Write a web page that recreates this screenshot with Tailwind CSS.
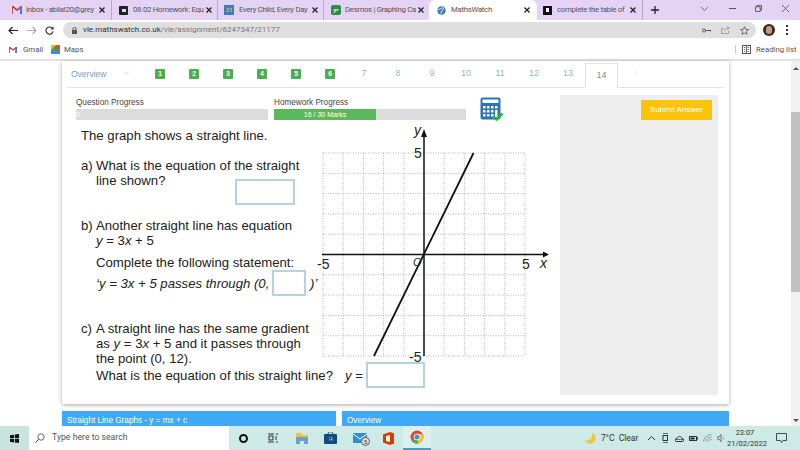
<!DOCTYPE html>
<html lang="en">
<head>
  <meta charset="UTF-8">
  <title>MathsWatch</title>
  <script src="https://cdn.jsdelivr.net/npm/@tailwindcss/browser@4"></script>
</head>
<body class="w-[800px] h-[450px] overflow-hidden flex flex-col bg-white font-['Liberation_Sans',sans-serif] text-[#333]">

  <!-- tab strip -->
  <div class="h-[20px] flex items-center bg-[#e5d3f6] pl-[8px] font-['Roboto',sans-serif] text-[7.8px] tracking-[-0.3px] text-[#555] whitespace-nowrap">
    <div class="w-[104px] h-full flex items-center border-r border-[#9a8aa8]/60">
      <svg class="ml-[4px] w-[10px] h-[8px] shrink-0" viewBox="0 0 10 8"><path d="M0 8V0l5 4 5-4v8" fill="none" stroke="#c5392b" stroke-width="1.6"/><path d="M8.7 1v7" stroke="#3a7de0" stroke-width="1.6"/></svg>
      <span class="ml-[4px] w-[68px]">Inbox - abilal20@grey</span>
      <svg class="ml-[5px] w-[6px] h-[6px] shrink-0" viewBox="0 0 6 6"><path d="M.5.5l5 5M5.500.5l-5 5" stroke="#222" stroke-width="1.300"/></svg>
    </div>
    <div class="w-[106px] h-full flex items-center border-r border-[#9a8aa8]/60">
      <div class="ml-[7px] w-[9px] h-[9px] bg-[#222] rounded-[1px] shrink-0 flex items-center justify-center"><div class="w-[4px] h-[3px] bg-[#ddd]"></div></div>
      <span class="ml-[5px] w-[66px]">08.02 Homework: Equ</span>
      <svg class="ml-[7px] w-[6px] h-[6px] shrink-0" viewBox="0 0 6 6"><path d="M.5.5l5 5M5.500.5l-5 5" stroke="#222" stroke-width="1.300"/></svg>
    </div>
    <div class="w-[106px] h-full flex items-center border-r border-[#9a8aa8]/60">
      <div class="ml-[6px] w-[10px] h-[10px] bg-[#3d7cc9] shrink-0 flex items-center justify-center text-[6px] leading-none text-[#e8b93a] font-bold">21</div>
      <span class="ml-[5px] w-[67px]">Every Child, Every Day</span>
      <svg class="ml-[6px] w-[6px] h-[6px] shrink-0" viewBox="0 0 6 6"><path d="M.5.5l5 5M5.500.5l-5 5" stroke="#222" stroke-width="1.300"/></svg>
    </div>
    <div class="w-[105px] h-full flex items-center">
      <div class="ml-[7px] w-[10px] h-[10px] bg-[#2e8b4a] rounded-[2px] shrink-0 flex items-center justify-center text-[5px] leading-none text-white font-bold">y=</div>
      <span class="ml-[4px] w-[68px]">Desmos | Graphing Ca</span>
      <svg class="ml-[5px] w-[6px] h-[6px] shrink-0" viewBox="0 0 6 6"><path d="M.5.5l5 5M5.500.5l-5 5" stroke="#222" stroke-width="1.300"/></svg>
    </div>
    <div class="w-[108px] h-full flex items-center bg-white rounded-t-[6px]">
      <svg class="ml-[8px] w-[9px] h-[9px] shrink-0" viewBox="0 0 10 10"><circle cx="5" cy="5" r="4.6" fill="#3f6f9e"/><path d="M1 4c2 1 3-2 5-2s1 2 0 3-2 3-1 4" fill="none" stroke="#a8d2e8" stroke-width="1.4"/></svg>
      <span class="ml-[5px] w-[72px]">MathsWatch</span>
      <svg class="ml-[1px] w-[6px] h-[6px] shrink-0" viewBox="0 0 6 6"><path d="M.5.5l5 5M5.500.5l-5 5" stroke="#222" stroke-width="1.300"/></svg>
    </div>
    <div class="w-[106px] h-full flex items-center border-r border-[#9a8aa8]/60">
      <div class="ml-[6px] w-[9px] h-[9px] bg-[#111] shrink-0 flex items-center justify-center"><div class="w-[3px] h-[4px] bg-white"></div></div>
      <span class="ml-[5px] w-[68px]">complete the table of</span>
      <svg class="ml-[5px] w-[6px] h-[6px] shrink-0" viewBox="0 0 6 6"><path d="M.5.5l5 5M5.500.5l-5 5" stroke="#222" stroke-width="1.300"/></svg>
    </div>
    <svg class="ml-[8px] w-[8px] h-[8px] shrink-0" viewBox="0 0 8 8"><path d="M4 0v8M0 4h8" stroke="#222" stroke-width="1.3"/></svg>
    <svg class="ml-[42px] w-[7px] h-[4px] mb-[3px] shrink-0" viewBox="0 0 7 4"><path d="M0 0l3.500 3.500L7 0" fill="none" stroke="#555" stroke-width="0.8"/></svg>
    <div class="ml-[21px] w-[7px] h-[1px] mb-[3px] bg-[#555] shrink-0"></div>
    <svg class="ml-[19px] w-[7px] h-[7px] mb-[3px] shrink-0" viewBox="0 0 7 7"><path d="M.5 1.800h4.700v4.700H.5zM1.800 1.800V.5h4.700v4.700H5.200" fill="none" stroke="#555" stroke-width="0.9"/></svg>
    <svg class="ml-[20px] w-[7px] h-[7px] mb-[3px] shrink-0" viewBox="0 0 7 7"><path d="M0 0l7 7M7 0L0 7" stroke="#555" stroke-width="0.8"/></svg>
  </div>

  <!-- address bar -->
  <div class="h-[20px] flex items-center bg-white">
    <svg class="ml-[8px] w-[10px] h-[9px] shrink-0" viewBox="0 0 10 9"><path d="M10 4.500H1M4.500 1L1 4.500 4.500 8" fill="none" stroke="#222" stroke-width="1.2"/></svg>
    <svg class="ml-[9px] w-[10px] h-[9px] shrink-0" viewBox="0 0 10 9"><path d="M0 4.500h9M5.500 1L9 4.500 5.500 8" fill="none" stroke="#aaa" stroke-width="1.2"/></svg>
    <svg class="ml-[8px] w-[9px] h-[9px] shrink-0" viewBox="0 0 10 10"><path d="M8.500 3A4 4 0 1 0 9 6" fill="none" stroke="#333" stroke-width="1.3"/><path d="M9.500 .5v3.500H6z" fill="#333"/></svg>
    <div class="ml-[9px] w-[693px] shrink-0 h-[16px] bg-[#dfdfdf] rounded-full flex items-center font-['Roboto',sans-serif] text-[8px] text-[#777] whitespace-nowrap">
      <svg class="ml-[9px] w-[5px] h-[7px] shrink-0" viewBox="0 0 5 7"><rect y="3" width="5" height="4" fill="#555"/><path d="M1 3V1.800a1.500 1.500 0 0 1 3 0V3" fill="none" stroke="#555"/></svg>
      <span class="ml-[6px]"><span class="text-[#333]">vle.mathswatch.co.uk</span>/vle/assignment/6247347/21177</span>
      <div class="flex-1"></div>
      <svg class="w-[9px] h-[5px] shrink-0" viewBox="0 0 9 5"><circle cx="2" cy="2.500" r="1.500" fill="none" stroke="#555"/><path d="M3.500 2.500H9V4" fill="none" stroke="#555"/></svg>
      <svg class="ml-[10px] w-[9px] h-[8px] shrink-0" viewBox="0 0 9 8"><path d="M2.500 2.500H.5v5h7V5M3.500 5c0-2 2-3 4-3M6 .3L8.500 2 6 3.800" fill="none" stroke="#888" stroke-width="0.7"/></svg>
      <svg class="ml-[10px] mr-[7px] w-[9px] h-[9px] shrink-0" viewBox="0 0 10 10"><path d="M5 .8l1.300 2.900 3.100.3-2.300 2.100.7 3.100L5 7.600 2.200 9.200l.7-3.100L.6 4l3.100-.3z" fill="none" stroke="#555" stroke-width="0.9"/></svg>
    </div>
    <div class="ml-[7px] w-[12px] h-[12px] rounded-full bg-[#3a2a22] shrink-0 flex items-center justify-center"><div class="w-[6px] h-[8px] rounded-full bg-[#c99a80]"></div></div>
    <div class="ml-[11px] w-[2px] h-[10px] flex flex-col justify-between shrink-0"><i class="block h-[2px] bg-[#333]"></i><i class="block h-[2px] bg-[#333]"></i><i class="block h-[2px] bg-[#333]"></i></div>
  </div>

  <!-- bookmarks bar -->
  <div class="h-[21px] flex items-center bg-white border-b-2 border-[#e2e2e2] font-['Roboto',sans-serif] text-[7.8px] text-[#555] whitespace-nowrap">
    <svg class="ml-[9px] w-[8px] h-[6px] shrink-0" viewBox="0 0 10 8"><path d="M0 8V0l5 4 5-4v8" fill="none" stroke="#c5392b" stroke-width="1.6"/><path d="M8.700 1v7" stroke="#3a7de0" stroke-width="1.6"/></svg>
    <span class="ml-[6px] w-[18px]">Gmail</span>
    <svg class="ml-[10px] w-[9px] h-[9px] shrink-0" viewBox="0 0 9 9"><rect width="9" height="9" y="0" fill="#3aa757"/><path d="M0 9l5-5 4 4v1z" fill="#4285f4"/><path d="M0 0h5L0 5z" fill="#fbbc05"/><circle cx="6.500" cy="2.500" r="2.200" fill="#ea4335"/></svg>
    <span class="ml-[4px]">Maps</span>
    <div class="flex-1"></div>
    <div class="w-px h-[9px] bg-[#ccc]"></div>
    <svg class="ml-[6px] w-[9px] h-[9px] shrink-0" viewBox="0 0 9 9"><rect x=".5" y=".5" width="8" height="8" fill="none" stroke="#555"/><path d="M4.500 1v7M2 2.500h1.500M2 4.500h1.500M2 6.500h1.500M5.500 2.500H7M5.500 4.500H7M5.500 6.500H7" stroke="#555" stroke-width="0.8"/></svg>
    <span class="ml-[5px] w-[44px]">Reading list</span>
  </div>

  <!-- page -->
  <div class="h-[365px] flex">
    <div class="w-[791px] pl-[62px]">
      <div class="relative w-[667px] h-[343px] bg-white shadow-[0_1px_4px_rgba(0,0,0,0.35)]">

        <!-- question nav -->
        <div class="mx-[5px] h-[27px] flex items-end border-b border-[#e4e4e4] text-[9px] text-[#8fb8d2]">
          <div class="w-[76px] h-full flex items-center justify-between pl-[4px] pr-[14px]"><span class="text-[8.5px] text-[#6ea3c5]">Overview</span><span class="text-[#ddd]">«</span></div>
          <div class="w-[34px] h-full flex items-center justify-center"><span class="w-[10px] h-[10px] rounded-[1px] bg-[#4cae4c] text-white text-[6.5px] font-bold flex items-center justify-center">1</span></div>
          <div class="w-[34px] h-full flex items-center justify-center"><span class="w-[10px] h-[10px] rounded-[1px] bg-[#4cae4c] text-white text-[6.5px] font-bold flex items-center justify-center">2</span></div>
          <div class="w-[34px] h-full flex items-center justify-center"><span class="w-[10px] h-[10px] rounded-[1px] bg-[#4cae4c] text-white text-[6.5px] font-bold flex items-center justify-center">3</span></div>
          <div class="w-[34px] h-full flex items-center justify-center"><span class="w-[10px] h-[10px] rounded-[1px] bg-[#4cae4c] text-white text-[6.5px] font-bold flex items-center justify-center">4</span></div>
          <div class="w-[34px] h-full flex items-center justify-center"><span class="w-[10px] h-[10px] rounded-[1px] bg-[#4cae4c] text-white text-[6.5px] font-bold flex items-center justify-center">5</span></div>
          <div class="w-[34px] h-full flex items-center justify-center"><span class="w-[10px] h-[10px] rounded-[1px] bg-[#4cae4c] text-white text-[6.5px] font-bold flex items-center justify-center">6</span></div>
          <div class="w-[34px] h-full flex items-center justify-center">7</div>
          <div class="w-[34px] h-full flex items-center justify-center">8</div>
          <div class="w-[34px] h-full flex items-center justify-center">9</div>
          <div class="w-[34px] h-full flex items-center justify-center">10</div>
          <div class="w-[34px] h-full flex items-center justify-center">11</div>
          <div class="w-[34px] h-full flex items-center justify-center">12</div>
          <div class="w-[34px] h-full flex items-center justify-center">13</div>
          <div class="w-[33px] h-[25px] mb-[-1px] flex items-center justify-center bg-white border border-b-0 border-[#e4e4e4] text-[#888]">14</div>
          <div class="ml-[16px] h-full flex items-center text-[#eee]">»</div>
        </div>

        <div class="flex pt-[7px] pl-[5px]">
          <!-- left column -->
          <div class="w-[493px]">
            <div class="flex pl-[9px] h-[26px] text-[8.2px] text-[#444] whitespace-nowrap">
              <div class="w-[192px] pt-[3px]">
                <div class="leading-[10px] h-[11px]">Question Progress</div>
                <div class="h-[11px] bg-[#dcdcdc] text-[7px] leading-[11px] text-white">0</div>
              </div>
              <div class="w-[192px] ml-[6px] pt-[3px]">
                <div class="leading-[10px] h-[11px]">Homework Progress</div>
                <div class="h-[11px] bg-[#dcdcdc]"><div class="w-[102px] h-full bg-[#5cb85c] text-center text-white text-[7px] leading-[11px]">16 / 30 Marks</div></div>
              </div>
              <svg class="ml-[14px] mt-[2px] w-[24px] h-[24px] shrink-0" viewBox="0 0 24 24">
                <rect x="0.5" y="0.5" width="20" height="22" rx="2" fill="#2c73b5"/>
                <rect x="2.5" y="2.5" width="16" height="3.5" fill="#fff"/>
                <path d="M3 9h2.500v2.500H3zM7 9h2.500v2.500H7zM11 9h2.500v2.500H11zM15 9h2.500v2.500H15zM3 13h2.500v2.500H3zM7 13h2.500v2.500H7zM11 13h2.500v2.500H11zM15 13h2.500v7H15zM3 17h2.500v2.500H3zM7 17h2.500v2.500H7zM11 17h2.500v2.500H11z" fill="#fff"/>
                <path d="M13.500 20l3 2.500 6-6" fill="none" stroke="#2bbb2b" stroke-width="2.600"/>
              </svg>
            </div>

            <!-- question text -->
            <div class="pl-[14px] mt-[7px] text-[13.16px] leading-[15px] text-[#222] whitespace-nowrap">
              <p>The graph shows a straight line.</p>
              <div class="mt-[15px] pl-[15px] relative">
                <span class="absolute left-0">a)</span>
                <p>What is the equation of the straight</p>
                <div class="flex items-start">
                  <span class="w-[139px]">line shown?</span>
                  <div class="mt-[6px] w-[60px] h-[26px] border-2 border-[#b5d2e2] bg-white"></div>
                </div>
              </div>
              <div class="mt-[13px] pl-[15px] relative">
                <span class="absolute left-0">b)</span>
                <p>Another straight line has equation</p>
                <p><i>y</i> = 3<i>x</i> + 5</p>
                <p class="mt-[7px]">Complete the following statement:</p>
                <div class="flex items-center h-[26px]">
                  <span class="w-[176px] italic">‘y = 3x + 5 passes through (0,</span>
                  <div class="w-[34px] h-[26px] border-2 border-[#b5d2e2] bg-white"></div>
                  <span class="ml-[4px] italic">)’</span>
                </div>
              </div>
              <div class="mt-[25px] pl-[15px] relative">
                <span class="absolute left-0">c)</span>
                <p>A straight line has the same gradient</p>
                <p>as <i>y</i> = 3<i>x</i> + 5 and it passes through</p>
                <p>the point (0, 12).</p>
                <div class="flex items-center h-[26px] -mt-[4px]">
                  <span class="w-[249px]">What is the equation of this straight line?</span>
                  <span class="w-[21px]"><i>y</i> =</span>
                  <div class="w-[59px] h-[26px] border-2 border-[#b5d2e2] bg-white"></div>
                </div>
              </div>
            </div>
          </div>

          <!-- right panel -->
          <div class="w-[158px] h-[300px] bg-[#eeeeee] pt-[5px] pl-[81px]">
            <div class="w-[71px] h-[20px] bg-[#fcc30b] text-white text-[8px] flex items-center justify-center whitespace-nowrap">Submit Answer</div>
          </div>
        </div>

        <!-- graph, page coordinates in the viewBox -->
        <svg class="absolute left-[253px] top-[64px] w-[240px] h-[240px]" viewBox="315 125 240 240" font-family="Liberation Sans" font-size="14" fill="#222">
          <path d="M323 153V356M343.200 153V356M363.400 153V356M383.600 153V356M403.800 153V356M444.200 153V356M464.400 153V356M484.600 153V356M504.800 153V356M525 153V356M323 153H525M323 173.300H525M323 193.600H525M323 213.900H525M323 234.200H525M323 274.800H525M323 295.100H525M323 315.400H525M323 335.700H525M323 356H525" fill="none" stroke="#b5b5b5" stroke-width="1" stroke-dasharray="1 1.500"/>
          <path d="M424 136V356M322 254.500H544" fill="none" stroke="#111" stroke-width="1.500"/>
          <path d="M424 129l-3 8h6zM549 254.500l-6-3v6z" fill="#111"/>
          <path d="M473.500 153L374 356" fill="none" stroke="#111" stroke-width="1.800"/>
          <text x="414" y="135" font-style="italic">y</text>
          <text x="414" y="158">5</text>
          <text x="317" y="269">-5</text>
          <text x="413" y="266" font-size="11" font-style="italic">O</text>
          <text x="522" y="269">5</text>
          <text x="540" y="268" font-style="italic">x</text>
          <text x="409" y="362">-5</text>
        </svg>
      </div>

      <div class="mt-[7px] flex gap-[6px] text-white text-[8.2px] leading-[10px]">
        <div class="w-[274px] h-[15px] bg-[#3fa9f5] pl-[5px] pt-[5px]">Straight Line Graphs - y = mx + c</div>
        <div class="w-[387px] h-[15px] bg-[#3fa9f5] pl-[5px] pt-[5px]">Overview</div>
      </div>
    </div>

    <!-- scrollbar -->
    <div class="w-[9px] h-full bg-[#f1f1f1] flex flex-col items-center text-[#555]">
      <div class="mt-[6px] w-0 h-0 border-x-[3px] border-x-transparent border-b-[3px] border-b-[#555]"></div>
      <div class="mt-[42px] w-full h-[180px] bg-[#c1c1c1]"></div>
      <div class="mt-[127px] w-0 h-0 border-x-[3px] border-x-transparent border-t-[3px] border-t-[#555]"></div>
    </div>
  </div>

  <!-- taskbar -->
  <div class="h-[24px] flex items-center bg-[#cdeae6] font-['Roboto',sans-serif] text-[8.7px] text-[#333] whitespace-nowrap">
    <div class="w-[29px] h-full bg-[#c7e5dc] flex items-center justify-center">
      <svg class="w-[9px] h-[9px]" viewBox="0 0 9 9"><path d="M0 1.300l4-.6v3.500H0zM4.800.6L9 0v4.200H4.800zM0 4.900h4v3.500l-4-.6zM4.800 4.900H9V9l-4.200-.6z" fill="#111"/></svg>
    </div>
    <div class="w-[200px] h-full bg-white flex items-center">
      <svg class="ml-[6px] w-[10px] h-[10px] shrink-0" viewBox="0 0 10 10"><circle cx="6" cy="4" r="3.200" fill="none" stroke="#444" stroke-width="0.8"/><path d="M3.700 6.300L.5 9.500" stroke="#444"/></svg>
      <span class="ml-[7px] text-[#555]">Type here to search</span>
    </div>
    <div class="w-[29px] flex justify-center"><div class="w-[9px] h-[9px] rounded-full border-2 border-[#111]"></div></div>
    <div class="w-[29px] flex justify-center">
      <svg class="w-[10px] h-[10px]" viewBox="0 0 10 10"><path d="M0 1h6M0 9h6M1 3h4v4H1zM8 1h2M8 3v4M8 9h2" fill="none" stroke="#333"/></svg>
    </div>
    <div class="w-[29px] flex justify-center">
      <svg class="w-[12px] h-[11px]" viewBox="0 0 12 11"><path d="M0 0h5l1 2h6v3H0z" fill="#f0c040"/><path d="M0 4h12v7H8V8H4v3H0z" fill="#6ba3c7"/></svg>
    </div>
    <div class="w-[29px] flex justify-center">
      <svg class="w-[13px] h-[12px]" viewBox="0 0 13 12"><rect y="2" width="13" height="10" rx="1" fill="#0f4c81"/><path d="M4 2c0-3 5-3 5 0" fill="none" stroke="#0f4c81"/><rect x="5" y="5" width="1.500" height="1.500" fill="#e85a3c"/><rect x="7" y="5" width="1.500" height="1.500" fill="#6fc04b"/><rect x="5" y="7" width="1.500" height="1.500" fill="#3fa9f5"/><rect x="7" y="7" width="1.500" height="1.500" fill="#f0c040"/></svg>
    </div>
    <div class="w-[29px] flex justify-center relative">
      <svg class="w-[14px] h-[10px]" viewBox="0 0 14 10"><rect width="14" height="10" rx="1" fill="#2d8fdc"/><path d="M0 1l7 5 7-5" fill="none" stroke="#fff"/></svg>
      <span class="absolute left-[16px] top-[4px] w-[9px] h-[9px] rounded-full border border-[#666] bg-[#ddd] text-[6px] leading-[7px] text-center">5</span>
    </div>
    <div class="w-[29px] flex justify-center">
      <svg class="w-[11px] h-[13px]" viewBox="0 0 11 13"><path d="M0 2.500L7 0l4 1.500v10L7 13l-7-2.500z" fill="#d83b01"/><path d="M3 4l4-1v7l-4-1z" fill="#f5f5f5"/></svg>
    </div>
    <div class="w-[28px] h-full flex justify-center items-center bg-[#dcf1ee] border-b-2 border-[#3fa0c8]">
      <svg class="w-[14px] h-[14px]" viewBox="0 0 14 14"><circle cx="7" cy="7" r="6.500" fill="#d9493b"/><path d="M7 7L1.400 10.200A6.500 6.500 0 0 0 8 13.400z" fill="#4aa856"/><path d="M7 7l1 6.400A6.500 6.500 0 0 0 13 4.500L7 3.500z" fill="#f3c33c"/><circle cx="7" cy="7" r="3.300" fill="#fff"/><circle cx="7" cy="7" r="2.500" fill="#4b8bdc"/></svg>
    </div>
    <div class="flex-1"></div>
    <svg class="w-[11px] h-[11px] shrink-0" viewBox="0 0 11 11"><path d="M7 0a5.500 5.500 0 1 1-7 7c3 1.500 8-1.500 7-7z" fill="#f0c93a"/></svg>
    <span class="ml-[5px] w-[37px] text-[8.5px] text-[#333]">7°C&nbsp; Clear</span>
    <svg class="ml-[10px] w-[7px] h-[4px] shrink-0" viewBox="0 0 7 4"><path d="M0 4l3.500-3.500L7 4" fill="none" stroke="#333"/></svg>
    <svg class="ml-[7px] w-[7px] h-[10px] shrink-0" viewBox="0 0 7 10"><rect x="1" y="2.500" width="4.500" height="5" fill="none" stroke="#333"/><path d="M1 .5h5M1 9.500h5" stroke="#333" stroke-width="0.700"/></svg>
    <svg class="ml-[6px] w-[9px] h-[7px] shrink-0" viewBox="0 0 9 7"><path d="M1.500 6.500a1.500 1.500 0 0 1 .3-3C2.500 1 6.500 1 7 3.500a1.500 1.500 0 0 1 .3 3z" fill="none" stroke="#333"/><path d="M.5 4.500h8" stroke="#333" stroke-width="0.700"/></svg>
    <svg class="ml-[5px] w-[9px] h-[5px] shrink-0" viewBox="0 0 9 5"><rect x=".5" y=".5" width="7" height="4" fill="none" stroke="#333"/><rect x="1.500" y="1.500" width="4" height="2" fill="#222"/><rect x="8" y="1.500" width="1" height="2" fill="#333"/></svg>
    <svg class="ml-[5px] w-[9px] h-[8px] shrink-0" viewBox="0 0 9 8"><path d="M.5 7.500C1 4 4 1 8.500.5M3 7.500C3 5.500 5 3.500 8.500 3M5.500 7.500c0-1 1-2 3-2" fill="none" stroke="#777" stroke-width="0.700"/></svg>
    <svg class="ml-[5px] w-[9px] h-[8px] shrink-0" viewBox="0 0 9 8"><path d="M0 3h2l2-2.500v7L2 5H0z" fill="none" stroke="#444" stroke-width="0.700"/><path d="M6 2.500c1 1 1 2 0 3" fill="none" stroke="#888" stroke-width="0.700"/></svg>
    <div class="ml-[1px] w-[36px] text-center text-[7.5px] leading-[11px] text-[#333]"><div>23:07</div><div>21/02/2022</div></div>
    <svg class="ml-[13px] mr-[13px] w-[11px] h-[10px] shrink-0" viewBox="0 0 11 10"><path d="M.5.5h10v7H7L5.500 9.500 4.500 7.500h-4z" fill="none" stroke="#222" stroke-width="0.800"/></svg>
  </div>

</body>
</html>
